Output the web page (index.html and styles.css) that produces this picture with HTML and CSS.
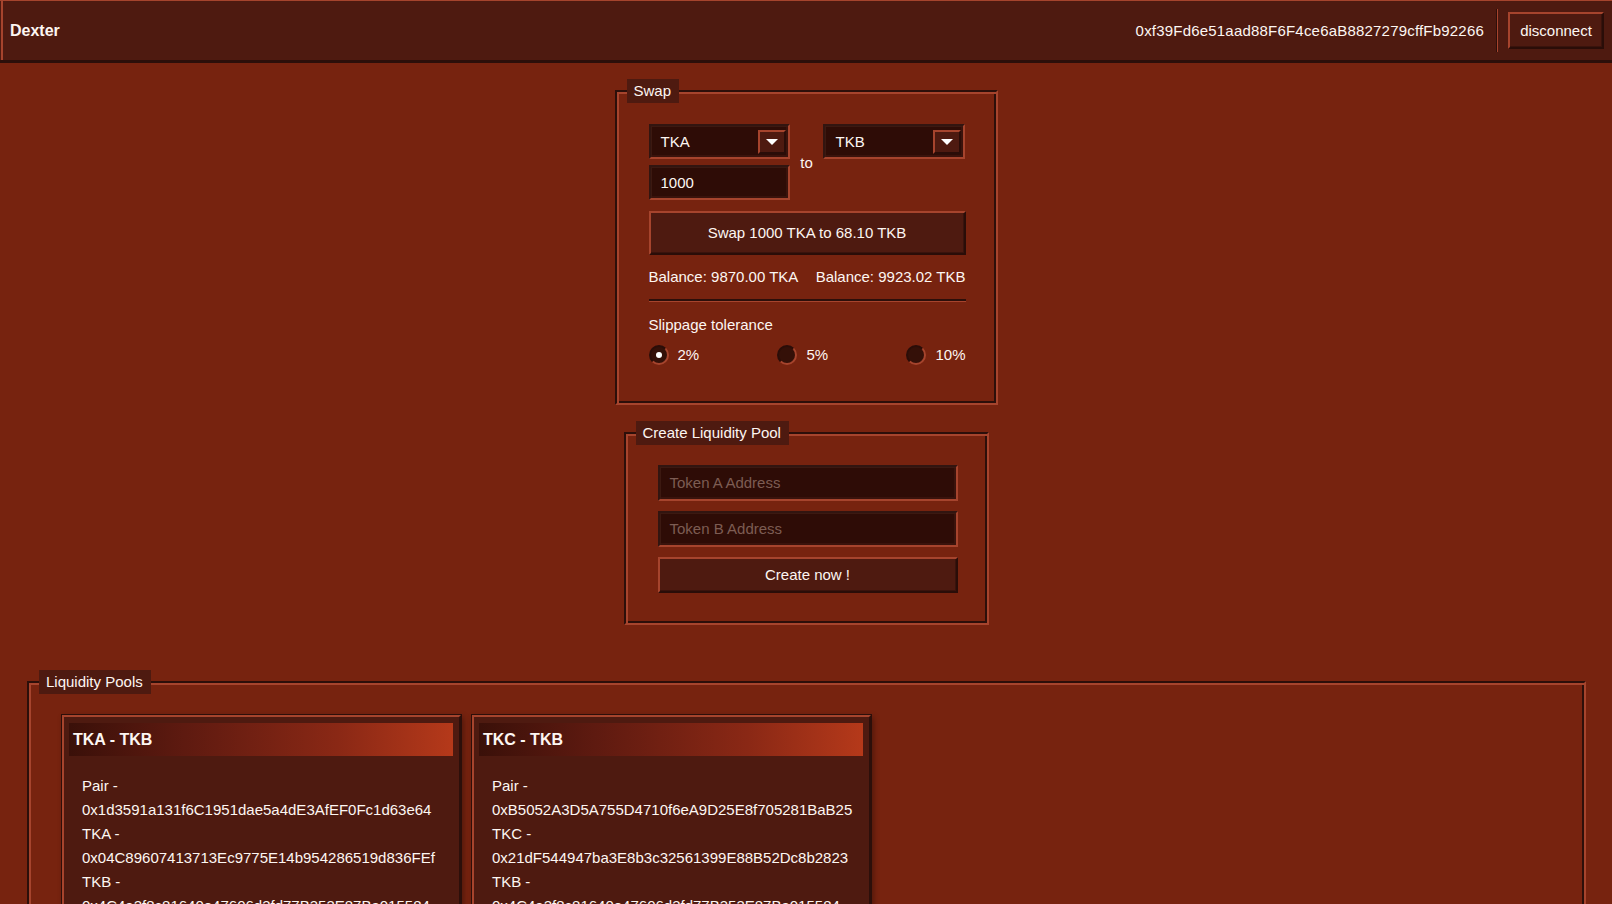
FILE: index.html
```html
<!DOCTYPE html>
<html lang="en">
<head>
<meta charset="utf-8">
<title>Dexter</title>
<link rel="stylesheet" href="styles.css">
</head>
<body>
<header class="appbar">
  <div class="brand">Dexter</div>
  <div class="account">
    <span class="address">0xf39Fd6e51aad88F6F4ce6aB8827279cffFb92266</span>
    <span class="vsep"></span>
    <button class="btn btn-disconnect">disconnect</button>
  </div>
</header>

<main class="main">
  <section class="group group-swap">
    <div class="legend">Swap</div>
    <div class="swap-row">
      <div class="swap-col">
        <div class="field select"><span class="select-value">TKA</span><span class="drop"><i class="tri"></i></span></div>
        <div class="field input">1000</div>
      </div>
      <span class="to">to</span>
      <div class="swap-col">
        <div class="field select"><span class="select-value">TKB</span><span class="drop"><i class="tri"></i></span></div>
      </div>
    </div>
    <button class="btn btn-swap">Swap 1000 TKA to 68.10 TKB</button>
    <div class="balances">
      <span>Balance: 9870.00 TKA</span>
      <span>Balance: 9923.02 TKB</span>
    </div>
    <div class="divider"></div>
    <div class="label">Slippage tolerance</div>
    <div class="radios">
      <label class="radio"><span class="radio-dot checked"></span><span>2%</span></label>
      <label class="radio"><span class="radio-dot"></span><span>5%</span></label>
      <label class="radio"><span class="radio-dot"></span><span>10%</span></label>
    </div>
  </section>

  <section class="group group-create">
    <div class="legend">Create Liquidity Pool</div>
    <div class="field text-input placeholder">Token A Address</div>
    <div class="field text-input placeholder">Token B Address</div>
    <button class="btn btn-create">Create now !</button>
  </section>

  <section class="group group-pools">
    <div class="legend">Liquidity Pools</div>
    <div class="cards">
      <div class="card">
        <div class="card-title">TKA - TKB</div>
        <div class="card-body">
          <div>Pair -</div>
          <div>0x1d3591a131f6C1951dae5a4dE3AfEF0Fc1d63e64</div>
          <div>TKA -</div>
          <div>0x04C89607413713Ec9775E14b954286519d836FEf</div>
          <div>TKB -</div>
          <div>0x4C4a2f8c81640e47606d3fd77B353E87Ba015584</div>
        </div>
      </div>
      <div class="card">
        <div class="card-title">TKC - TKB</div>
        <div class="card-body">
          <div>Pair -</div>
          <div>0xB5052A3D5A755D4710f6eA9D25E8f705281BaB25</div>
          <div>TKC -</div>
          <div>0x21dF544947ba3E8b3c32561399E88B52Dc8b2823</div>
          <div>TKB -</div>
          <div>0x4C4a2f8c81640e47606d3fd77B353E87Ba015584</div>
        </div>
      </div>
    </div>
  </section>
</main>
</body>
</html>
```

FILE: styles.css
```css
* { box-sizing: border-box; }

html { overflow: hidden; }

body {
  margin: 0;
  background: #77230f;
  color: #fdf6f2;
  font-family: "Liberation Sans", Arial, sans-serif;
  font-size: 15px;
  line-height: 20px;
}

button {
  font: inherit;
  color: inherit;
  cursor: pointer;
}

/* ---------- App bar ---------- */
.appbar {
  height: 63px;
  display: flex;
  align-items: center;
  justify-content: space-between;
  padding: 0 8px 0 10px;
  background: #4e1a10;
  border-top: 1px solid #a6442d;
  border-bottom: 3px solid #2c0f0a;
  box-shadow: inset 1px 0 0 #4e1a10, inset 3px 0 0 #a6442d;
}

.brand {
  font-weight: bold;
  font-size: 16px;
}

.account {
  display: flex;
  align-items: center;
}

.address {
  font-size: 15px;
  letter-spacing: 0.2px;
  margin-right: 12px;
}

.vsep {
  width: 2px;
  height: 43px;
  border-left: 1px solid #2c0f0a;
  border-right: 1px solid #a6442d;
  margin-right: 10px;
}

/* ---------- Bevels ---------- */
.btn {
  background: #4e1a10;
  border: 2px solid;
  border-color: #a6442d #2a0d08 #2a0d08 #a6442d;
  box-shadow: inset -1px -1px 0 #3a130c;
  padding: 0;
  text-align: center;
}

.btn-disconnect {
  width: 96px;
  height: 37px;
}

.field {
  background: #2e0c06;
  border: 2px solid;
  border-color: #321510 #a6442d #a6442d #321510;
  box-shadow: inset 1px 1px 0 #3c1911, inset -2px -2px 0 #3a130c;
}

/* ---------- Groups (fieldsets) ---------- */
.main {
  display: flex;
  flex-direction: column;
  align-items: center;
}

.group {
  position: relative;
  border: 2px solid;
  border-color: #2c0f0a #a6442d #a6442d #2c0f0a;
  box-shadow: inset 2px 2px 0 #a6442d, inset -2px -2px 0 #2c0f0a;
}

.legend {
  position: absolute;
  top: -13px;
  left: 10px;
  height: 24px;
  line-height: 24px;
  padding: 0 8px 0 7px;
  background: #4e1a10;
  white-space: nowrap;
}

/* ---------- Swap ---------- */
.group-swap {
  margin-top: 27px;
  width: 383px;
  padding: 32px 30px 38px 32px;
}

.swap-row {
  display: flex;
  justify-content: space-between;
  align-items: flex-start;
  height: 76px;
}

.swap-col {
  display: flex;
  flex-direction: column;
  gap: 6px;
}

.to {
  align-self: center;
  margin-top: 2px;
}

.select {
  width: 141px;
  height: 35px;
  display: flex;
  align-items: center;
  justify-content: space-between;
  padding: 0 2px 0 10px;
}

.swap-col:last-child .select { width: 142px; }

.drop {
  width: 28px;
  height: 24px;
  display: flex;
  align-items: center;
  justify-content: center;
  background: #4e1a10;
  border: 2px solid;
  border-color: #a6442d #2a0d08 #2a0d08 #a6442d;
  margin-top: 1px;
}

.tri {
  display: block;
  width: 0;
  height: 0;
  border-left: 6px solid transparent;
  border-right: 6px solid transparent;
  border-top: 6px solid #ffffff;
}

.input {
  width: 141px;
  height: 35px;
  display: flex;
  align-items: center;
  padding-left: 10px;
}

.btn-swap {
  display: block;
  width: 100%;
  height: 44px;
  margin-top: 11px;
}

.balances {
  display: flex;
  justify-content: space-between;
  margin-top: 12px;
}

.divider {
  margin-top: 12px;
  border-top: 2px solid #2c0f0a;
  border-bottom: 1px solid #a6442d;
}

.label {
  margin-top: 13px;
}

.radios {
  display: flex;
  justify-content: space-between;
  margin-top: 10px;
  height: 20px;
}

.radio {
  display: flex;
  align-items: center;
  gap: 9px;
}

.radio-dot {
  width: 20px;
  height: 20px;
  border-radius: 50%;
  background: #341008;
  border: 2px solid;
  border-color: #2a0d08 #a6442d #a6442d #2a0d08;
  display: flex;
  align-items: center;
  justify-content: center;
}

.radio-dot.checked::after {
  content: "";
  width: 6px;
  height: 6px;
  border-radius: 50%;
  background: #ffffff;
}

/* ---------- Create ---------- */
.group-create {
  margin-top: 27px;
  width: 365px;
  padding: 31px 29px 30px 32px;
  display: flex;
  flex-direction: column;
  gap: 10px;
}

.text-input {
  height: 36px;
  display: flex;
  align-items: center;
  padding-left: 10px;
}

.placeholder { color: #7d5c53; }

.btn-create {
  height: 36px;
  width: 100%;
}

/* ---------- Pools ---------- */
.group-pools {
  align-self: stretch;
  margin: 56px 26px 0 27px;
  padding: 32px 33px 40px 33px;
}

.cards {
  display: flex;
  gap: 11px;
}

.card {
  width: 399px;
  background: #4e1a10;
  border: 2px solid;
  border-color: #a6442d #2c0f0a #2c0f0a #a6442d;
  box-shadow: 0 0 0 1px #2c0f0a, 2px 2px 6px rgba(20, 5, 2, 0.45);
  padding: 6px 6px 20px 5px;
}

.card-title {
  height: 33px;
  line-height: 33px;
  padding-left: 4px;
  font-weight: bold;
  font-size: 16px;
  background: linear-gradient(to right, #3a1009 0%, #5e1a10 30%, #8a2815 70%, #b5391a 100%);
}

.card-body {
  padding: 18px 4px 0 13px;
  line-height: 24px;
  white-space: nowrap;
  overflow: hidden;
}
```
